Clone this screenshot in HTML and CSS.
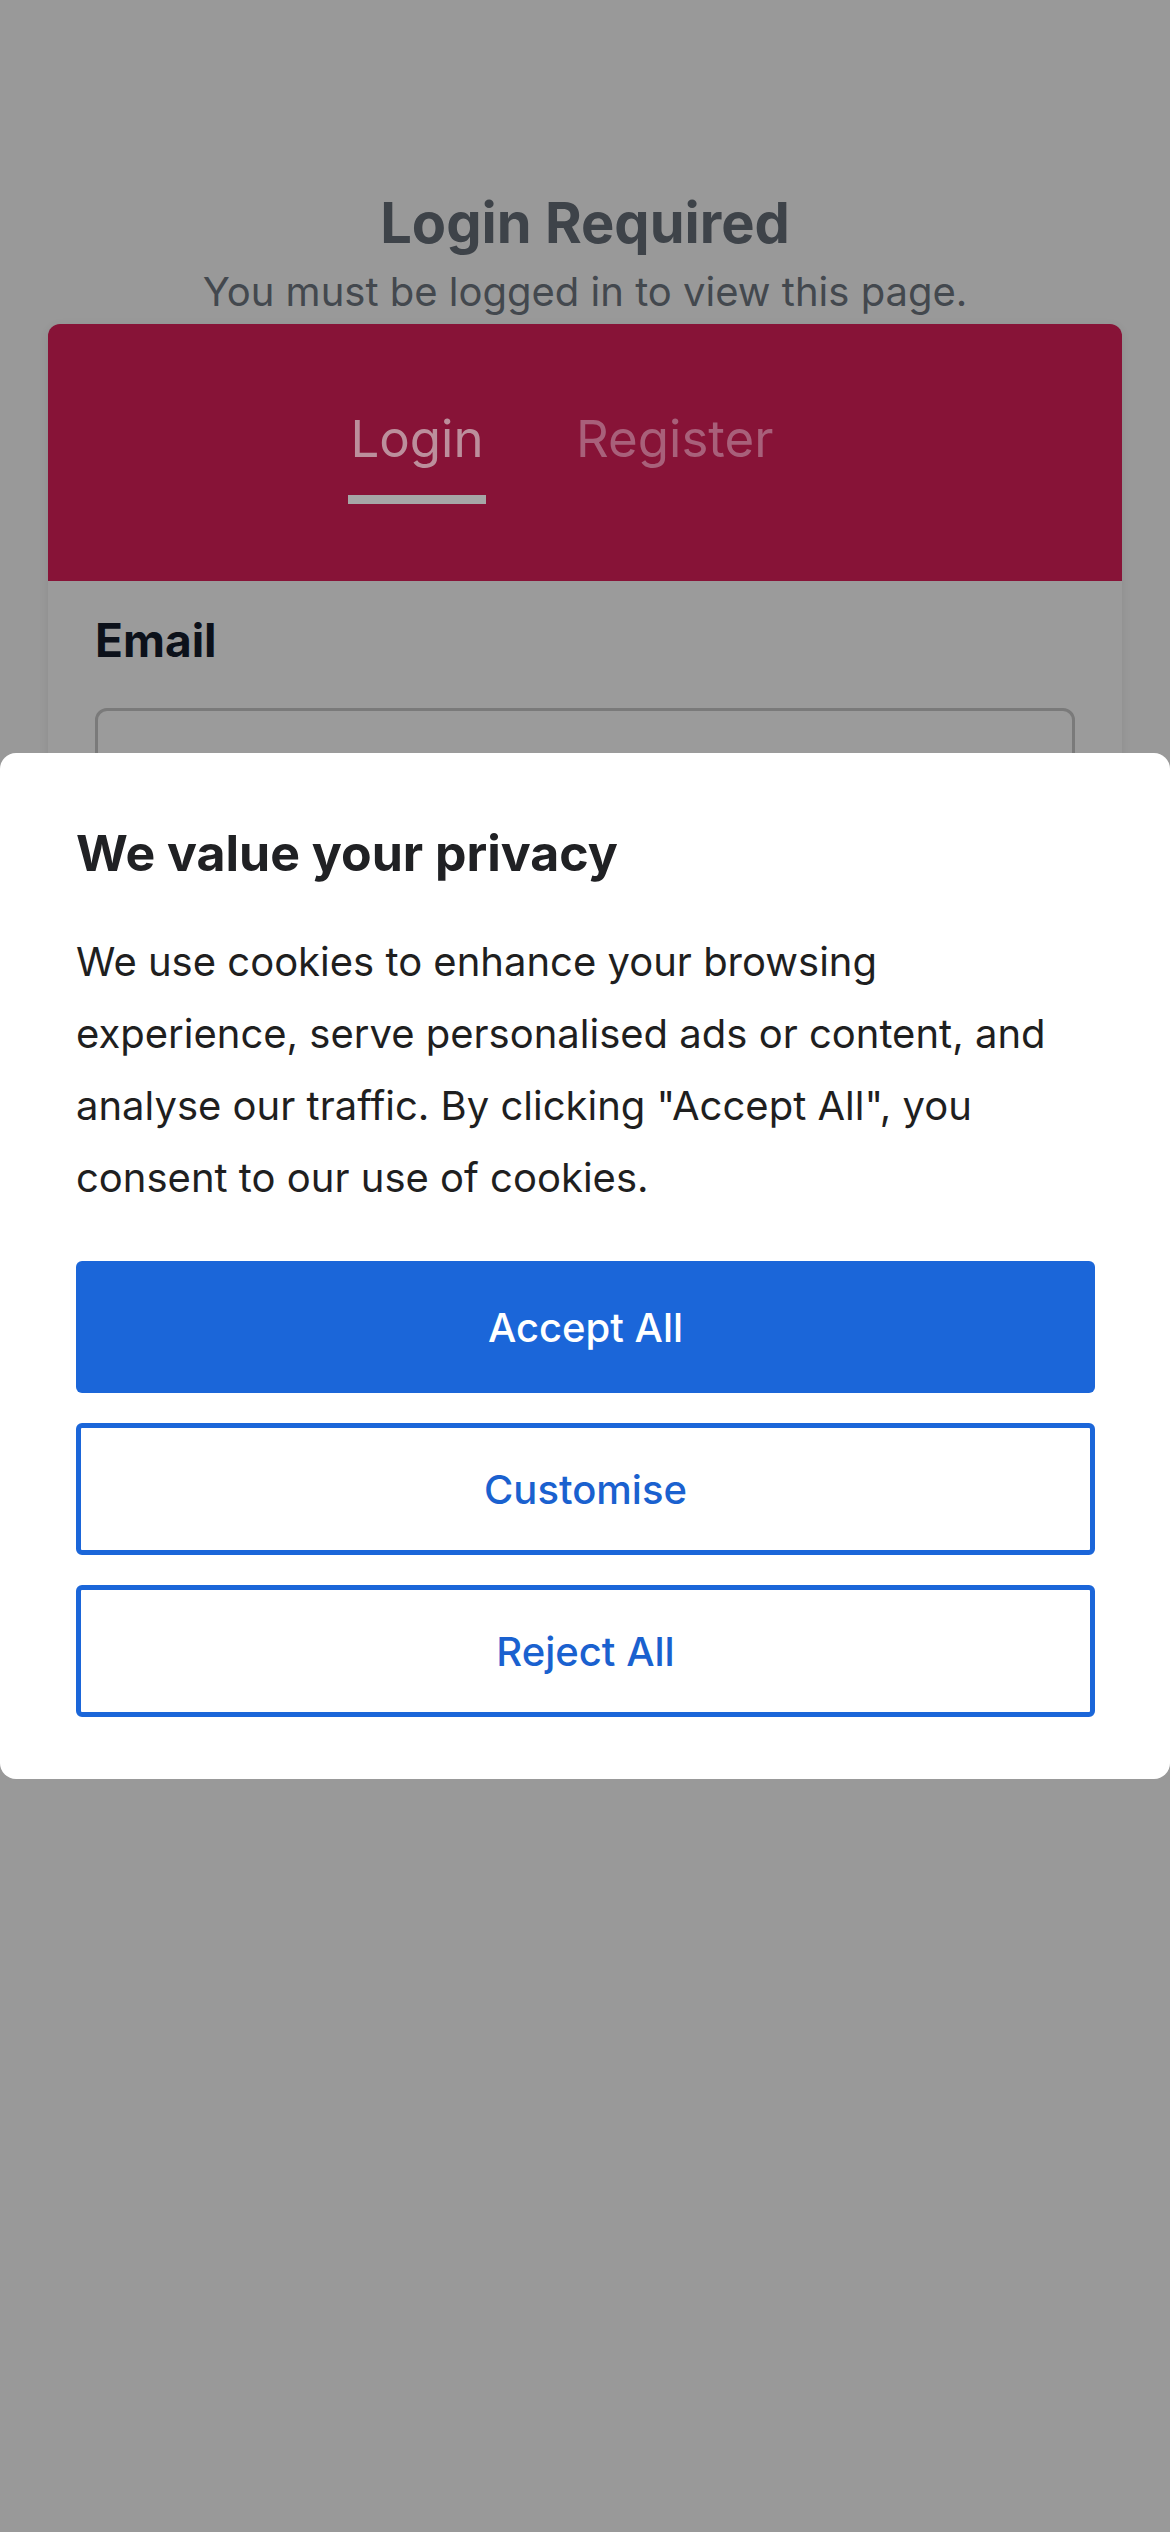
FILE: index.html
```html
<!DOCTYPE html>
<html lang="en">
<head>
<meta charset="utf-8">
<title>Login Required</title>
<link rel="stylesheet" href="styles.css">
</head>
<body>
<main class="page">
  <h1 class="page-title">Login Required</h1>
  <p class="page-sub">You must be logged in to view this page.</p>
  <section class="card">
    <div class="card-head">
      <div class="tabs">
        <div class="tab tab-active">
          <span class="tab-label">Login</span>
          <span class="tab-bar"></span>
        </div>
        <div class="tab">
          <span class="tab-label">Register</span>
        </div>
      </div>
    </div>
    <div class="card-body">
      <label class="field-label">Email</label>
      <div class="field-input"></div>
    </div>
  </section>
</main>

<div class="backdrop">
  <div class="consent">
    <h2 class="consent-title">We value your privacy</h2>
    <p class="consent-text">We use cookies to enhance your browsing experience, serve personalised ads or content, and analyse our traffic. By clicking "Accept All", you consent to our use of cookies.</p>
    <div class="consent-actions">
      <button class="btn btn-primary">Accept All</button>
      <button class="btn btn-outline">Customise</button>
      <button class="btn btn-outline">Reject All</button>
    </div>
  </div>
</div>
</body>
</html>
```
FILE: styles.css
```css
html, body {
  margin: 0;
  padding: 0;
}
body {
  background: #999999;
  font-family: Inter, Roboto, "Liberation Sans", sans-serif;
  width: 1170px;
  height: 2532px;
  overflow: hidden;
}
.page {
  padding-top: 189px;
  text-align: center;
}
.page-title {
  margin: 0;
  font-size: 56px;
  line-height: 68px;
  font-weight: 700;
  color: #3e4349;
}
.page-sub {
  margin: 12px 0 0;
  font-size: 40px;
  line-height: 46px;
  font-weight: 400;
  color: #43484e;
}
.card {
  margin: 9px 48px 0;
  border-radius: 12px 12px 0 0;
  background: #9b9b9b;
  box-shadow: 0 2px 10px rgba(0, 0, 0, 0.08);
  text-align: left;
}
.card-head {
  background: #871337;
  border-radius: 12px 12px 0 0;
  padding: 84px 0 77px 300px;
}
.tabs {
  display: flex;
  gap: 90px;
}
.tab {
  display: flex;
  flex-direction: column;
  align-items: center;
}
.tab-label {
  font-size: 51px;
  line-height: 62px;
  font-weight: 400;
  color: #a8607a;
}
.tab-active .tab-label {
  color: #bc8f9c;
}
.tab-bar {
  width: 138px;
  height: 9px;
  margin-top: 25px;
  background: #a6a6a6;
}
.card-body {
  padding: 31px 47px 60px;
}
.field-label {
  display: block;
  font-size: 46px;
  line-height: 56px;
  font-weight: 700;
  color: #0c111a;
}
.field-input {
  margin-top: 40px;
  height: 124px;
  border: 3px solid #7a7a7a;
  border-radius: 12px;
}
.backdrop {
  position: fixed;
  inset: 0;
  display: flex;
  align-items: center;
}
.consent {
  width: 100%;
  box-sizing: border-box;
  background: #ffffff;
  border-radius: 16px;
  padding: 71px 75px 62px 76px;
}
.consent-title {
  margin: 0;
  font-size: 50px;
  line-height: 58px;
  font-weight: 700;
  color: #202124;
}
.consent-text {
  margin: 44px 0 0;
  font-size: 40px;
  line-height: 72px;
  font-weight: 400;
  color: #1f1f1f;
}
.consent-actions {
  margin-top: 47px;
  display: flex;
  flex-direction: column;
  gap: 30px;
}
.btn {
  display: block;
  width: 100%;
  height: 132px;
  border-radius: 6px;
  font-family: inherit;
  font-size: 40px;
  font-weight: 500;
  box-sizing: border-box;
  cursor: pointer;
}
.btn-primary {
  background: #1b66d9;
  border: 0;
  color: #ffffff;
}
.btn-outline {
  background: #ffffff;
  border: 5px solid #1b66d9;
  color: #1a61cf;
}
```
